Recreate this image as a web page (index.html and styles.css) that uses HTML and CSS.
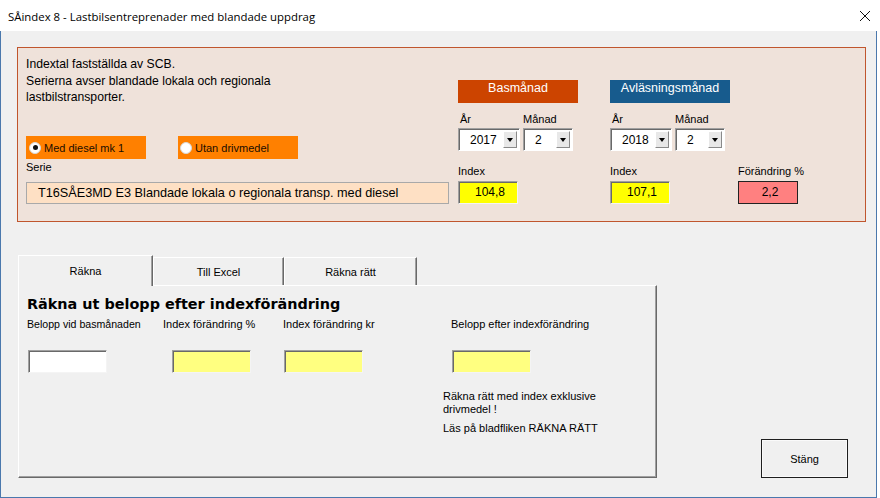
FILE: index.html
```html
<!DOCTYPE html>
<html lang="sv">
<head>
    <meta charset="UTF-8">
    <meta name="viewport" content="width=device-width, initial-scale=1.0">
    <title>SÅindex 8</title>
    <link rel="stylesheet" href="styles.css">
</head>
<body>
    <div class="titlebar">
        <span class="title">SÅindex 8 - Lastbilsentreprenader med blandade uppdrag</span>
        <svg class="close" width="12" height="12" viewBox="0 0 12 12">
            <path d="M1 1 L11 11 M11 1 L1 11" stroke="#111" stroke-width="1" fill="none"/>
        </svg>
    </div>
    <div class="client">
        <section class="top">
            <div class="info">
                <p class="intro">Indextal fastställda av SCB.<br>Serierna avser blandade lokala och regionala<br>lastbilstransporter.</p>
                <div class="options">
                    <div class="opt"><span class="radio on"></span>Med diesel mk 1</div>
                    <div class="opt opt2"><span class="radio"></span>Utan drivmedel</div>
                </div>
                <div class="lbl serie-lbl">Serie</div>
                <div class="serie">T16SÅE3MD E3 Blandade lokala o regionala transp. med diesel</div>
            </div>

            <div class="period">
                <div class="head bas">Basmånad</div>
                <div class="pick">
                    <div class="field">
                        <div class="lbl yr">År</div>
                        <div class="combo year"><span>2017</span><i class="drop"></i></div>
                    </div>
                    <div class="field">
                        <div class="lbl">Månad</div>
                        <div class="combo month"><span>2</span><i class="drop"></i></div>
                    </div>
                </div>
                <div class="lbl idx-lbl">Index</div>
                <div class="value yellow">104,8</div>
            </div>

            <div class="period period2">
                <div class="head avl">Avläsningsmånad</div>
                <div class="pick">
                    <div class="field">
                        <div class="lbl yr">År</div>
                        <div class="combo year"><span>2018</span><i class="drop"></i></div>
                    </div>
                    <div class="field">
                        <div class="lbl">Månad</div>
                        <div class="combo month"><span>2</span><i class="drop"></i></div>
                    </div>
                </div>
                <div class="lbl idx-lbl">Index</div>
                <div class="value yellow">107,1</div>
            </div>

            <div class="change">
                <div class="lbl">Förändring %</div>
                <div class="value red">2,2</div>
            </div>
        </section>

        <div class="lower">
            <div class="tabs">
                <div class="tabstrip">
                    <div class="tab active">Räkna</div>
                    <div class="tab t2">Till Excel</div>
                    <div class="tab t3">Räkna rätt</div>
                </div>
                <div class="tabpage">
                    <h2>Räkna ut belopp efter indexförändring</h2>
                    <div class="calc">
                        <div class="col c1">
                            <div class="lbl">Belopp vid basmånaden</div>
                            <div class="input white"></div>
                        </div>
                        <div class="col c2">
                            <div class="lbl">Index förändring %</div>
                            <div class="input pale"></div>
                        </div>
                        <div class="col c3">
                            <div class="lbl">Index förändring kr</div>
                            <div class="input pale"></div>
                        </div>
                        <div class="col c4">
                            <div class="lbl">Belopp efter indexförändring</div>
                            <div class="input pale"></div>
                            <div class="notes">
                                <p>Räkna rätt med index exklusive<br>drivmedel !</p>
                                <p class="read">Läs på bladfliken RÄKNA RÄTT</p>
                            </div>
                        </div>
                    </div>
                </div>
            </div>
            <button class="stang">Stäng</button>
        </div>
    </div>
</body>
</html>
```

FILE: styles.css
```css
*{
    padding: 0;
    margin: 0;
    box-sizing: border-box;
}
body
{
    width: 880px;
    height: 498px;
    overflow: hidden;
    background: #fff;
    font-family: "Liberation Sans", Arial, sans-serif;
    font-size: 11px;
    color: #000;
}
.titlebar
{
    height: 31px;
    display: flex;
    align-items: center;
    justify-content: space-between;
    padding: 0 9px 0 8px;
    background: #fff;
}
.title
{
    font-family: "Open Sans", "Noto Sans", sans-serif;
    font-size: 11.4px;
    color: #000;
    margin-top: 1px;
}
.close
{
    margin-top: 1px;
}
.client
{
    width: 877px;
    height: 467px;
    background: #f0f0f0;
    border-left: 1px solid #4a78ad;
    border-right: 1px solid #4a78ad;
    border-bottom: 1px solid #4a78ad;
    padding: 16px 0 0 16px;
}

/* top panel */
.top
{
    width: 849px;
    height: 175px;
    border: 1px solid #c0562e;
    background: #efe2da;
    display: flex;
}
.lbl
{
    font-size: 11px;
    line-height: 13px;
    white-space: nowrap;
}
.info
{
    width: 423px;
    margin-left: 8px;
    padding-top: 8px;
}
.intro
{
    font-size: 12.2px;
    line-height: 16.5px;
}
.options
{
    display: flex;
    gap: 32px;
    margin-top: 30.5px;
}
.opt
{
    width: 120px;
    height: 23px;
    background: #ff8000;
    display: flex;
    align-items: center;
    padding-left: 3px;
    gap: 3px;
    color: #1a0d00;
}
.opt2
{
    padding-left: 2px;
}
.radio
{
    width: 12px;
    height: 12px;
    border-radius: 50%;
    background: #fff;
    border: 1px solid #d8d8d8;
    display: flex;
    align-items: center;
    justify-content: center;
}
.radio.on::after
{
    content: "";
    width: 5px;
    height: 5px;
    border-radius: 50%;
    background: #111;
}
.serie-lbl
{
    margin-top: 2px;
}
.serie
{
    margin-top: 8px;
    height: 22px;
    border: 1px solid #a9a9a9;
    background: #fee0c4;
    font-size: 12.7px;
    line-height: 20px;
    padding-left: 11px;
    white-space: nowrap;
}

.period
{
    width: 152px;
    margin-left: 9px;
    padding-top: 32px;
}
.period2
{
    width: 128px;
    margin-left: 0;
}
.head
{
    width: 120px;
    height: 23px;
    color: #fff;
    font-size: 12.5px;
    line-height: 17px;
    text-align: center;
}
.bas
{
    background: #cc4400;
}
.avl
{
    background: #175b8d;
}
.pick
{
    display: flex;
    gap: 3px;
    margin-top: 10px;
}
.yr
{
    padding-left: 2px;
}
.combo
{
    margin-top: 2px;
    height: 23px;
    background: #fff;
    border-top: 1px solid #a0a0a0;
    border-left: 1px solid #a0a0a0;
    border-bottom: 1px solid #fff;
    border-right: 1px solid #fff;
    box-shadow: inset 1px 1px 0 #696969;
    display: flex;
    align-items: center;
    font-size: 12px;
}
.combo span
{
    flex: 1;
    padding-left: 11px;
}
.year
{
    width: 62px;
}
.month
{
    width: 50px;
}
.drop
{
    width: 14px;
    height: 17px;
    margin-right: 2px;
    background: #e8e8e8;
    border-top: 1px solid #fff;
    border-left: 1px solid #fff;
    border-right: 1px solid #8a8a8a;
    border-bottom: 1px solid #8a8a8a;
    display: flex;
    align-items: center;
    justify-content: center;
}
.drop::after
{
    content: "";
    border-left: 3.5px solid transparent;
    border-right: 3.5px solid transparent;
    border-top: 4px solid #000;
}
.idx-lbl
{
    margin-top: 14px;
}
.value
{
    margin-top: 3px;
    width: 60px;
    height: 23px;
    font-size: 12px;
    line-height: 21px;
    text-align: center;
}
.yellow
{
    background: #ffff00;
    border-top: 1px solid #a0a0a0;
    border-left: 1px solid #a0a0a0;
    border-bottom: 1px solid #f4f4f4;
    border-right: 1px solid #f4f4f4;
    box-shadow: inset 1px 1px 0 #696969;
    padding-left: 4px;
}
.red
{
    background: #ff8080;
    border: 1px solid #222;
    padding-left: 4px;
}
.change
{
    padding-top: 117px;
}

/* lower part */
.lower
{
    display: flex;
    align-items: flex-end;
    margin-top: 33px;
    margin-left: 1px;
}
.tabs
{
    width: 639px;
}
.tabstrip
{
    display: flex;
    align-items: flex-end;
    height: 30px;
}
.tab
{
    height: 28px;
    border-top: 1px solid #fff;
    border-left: 1px solid #fff;
    border-right: 1px solid #696969;
    box-shadow: inset -1px 0 0 #a0a0a0;
    text-align: center;
    line-height: 13px;
    padding-top: 8px;
    background: #f0f0f0;
}
.active
{
    width: 135px;
    height: 31px;
    margin-bottom: -1px;
    padding-top: 9px;
    position: relative;
}
.t2
{
    width: 131px;
}
.t3
{
    width: 133px;
}
.tabpage
{
    height: 193px;
    border-top: 1px solid #fff;
    border-left: 1px solid #fff;
    border-right: 1px solid #696969;
    border-bottom: 1px solid #696969;
    box-shadow: inset -1px -1px 0 #a0a0a0;
    padding: 9px 0 0 8px;
}
h2
{
    font-family: "DejaVu Sans", Verdana, sans-serif;
    font-size: 14.4px;
    line-height: 18px;
    font-weight: bold;
}
.calc
{
    display: grid;
    grid-template-columns: 136px 120px 168px 1fr;
    margin-top: 5px;
}
.c1 .lbl
{
    font-size: 10.6px;
}
.input
{
    margin-top: 19px;
    width: 79px;
    height: 23px;
    border-top: 1px solid #a0a0a0;
    border-left: 1px solid #a0a0a0;
    border-bottom: 1px solid #f4f4f4;
    border-right: 1px solid #f4f4f4;
    box-shadow: inset 1px 1px 0 #696969;
    margin-left: 1px;
}
.c2 .input
{
    margin-left: 9px;
}
.white
{
    background: #fff;
}
.pale
{
    background: #ffff80;
}
.notes
{
    margin-left: -8px;
    margin-top: 17px;
    line-height: 13.4px;
}
.read
{
    margin-top: 5px;
}
.stang
{
    width: 87px;
    height: 39px;
    margin-left: 104px;
    background: #f0f0f0;
    border: 1px solid #1e1e1e;
    box-shadow: inset 0 0 0 1px #fafafa;
    font-family: "Liberation Sans", Arial, sans-serif;
    font-size: 11px;
    color: #000;
}
```
